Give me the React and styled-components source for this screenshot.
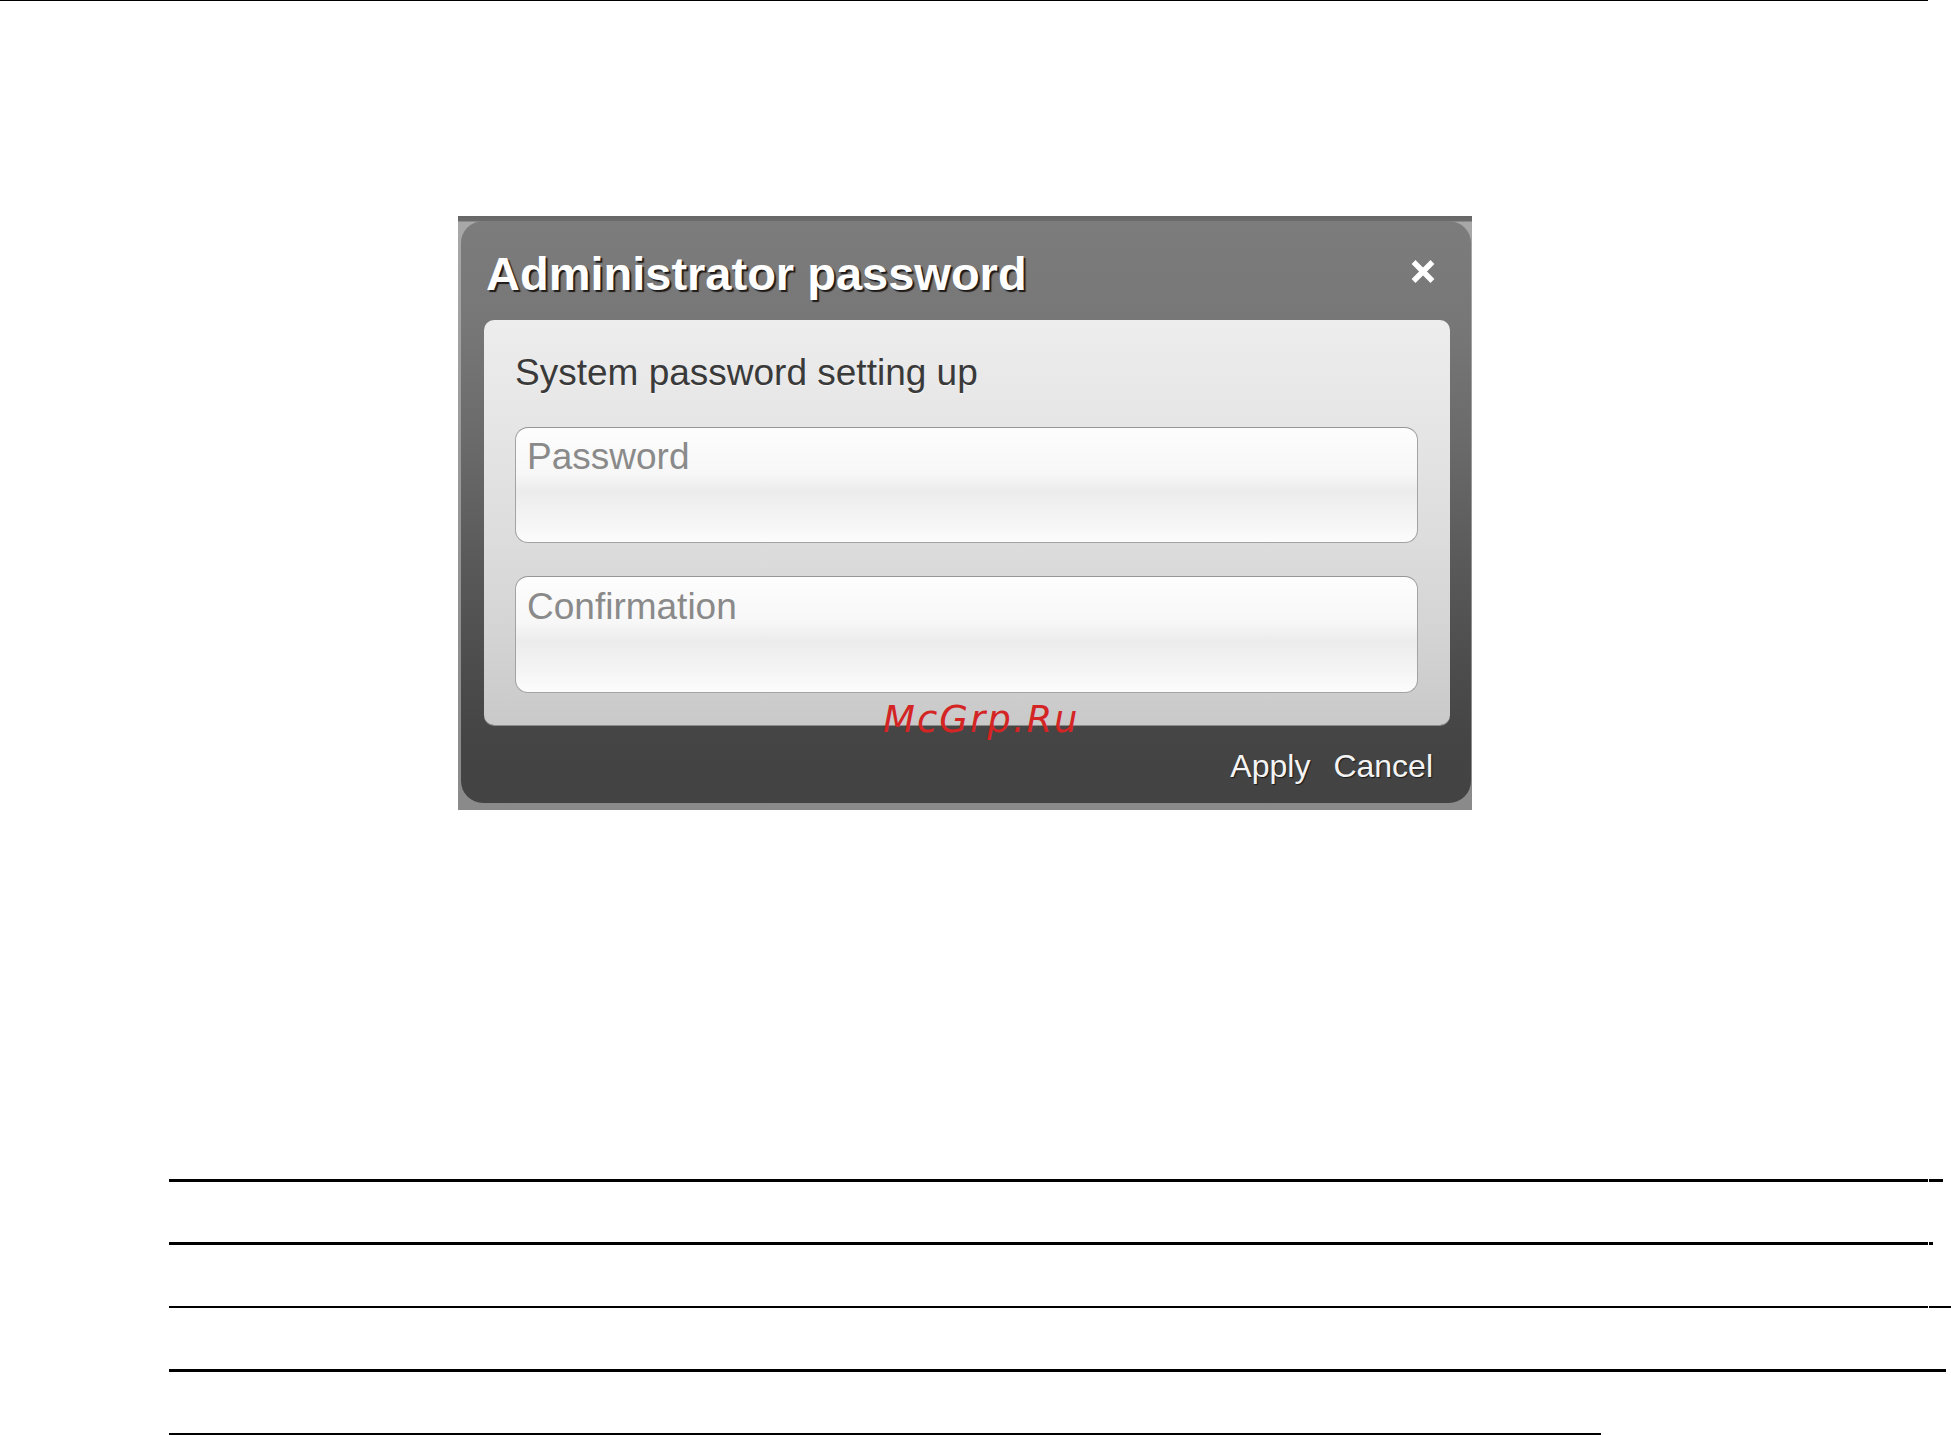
import React from "react";
import styled, { createGlobalStyle } from "styled-components";

const Global = createGlobalStyle`
  html, body { margin: 0; padding: 0; background: #fff; }
  body { font-family: "Liberation Sans", Arial, sans-serif; overflow: hidden; }
`;

const Page = styled.div`
  width: 1951px;
  display: flex;
  flex-direction: column;
`;

const TopRule = styled.div`
  width: 1928px;
  height: 1px;
  background: #000;
`;

const Frame = styled.div`
  margin: 215px 0 0 458px;
  width: 1014px;
  height: 594px;
  box-sizing: border-box;
  padding: 5px 1px 7px 3px;
  background: linear-gradient(to bottom, #676767 0, #6b6b6b 5px, #a8a8a8 6px, #8f8f8f 70%, #8a8a8a 100%);
  display: flex;
`;

const Dialog = styled.div`
  position: relative;
  flex: 1;
  border-radius: 22px;
  background: linear-gradient(to bottom, #7c7c7c 0%, #777 18%, #6a6a6a 38%, #5a5a5a 58%, #4a4a4a 80%, #444 90%, #434343 100%);
  display: flex;
  flex-direction: column;
`;

const Header = styled.div`
  height: 99px;
  box-sizing: border-box;
  padding: 29px 36px 0 25px;
  display: flex;
  justify-content: space-between;
  align-items: flex-start;
`;

const Title = styled.h1`
  margin: 0;
  font-family: "Liberation Sans", Arial, sans-serif;
  font-weight: bold;
  font-size: 47px;
  line-height: 47px;
  color: #fff;
  text-shadow: 2px 2px 1px #1e1a18;
`;

const CloseButton = styled.button`
  margin-top: 10px;
  padding: 0;
  border: 0;
  background: none;
  width: 24px;
  height: 23px;
  cursor: pointer;
  display: block;
`;

const Panel = styled.div`
  margin: 0 21px 0 23px;
  border-radius: 10px;
  background: linear-gradient(to bottom, #ededed 0%, #e6e6e6 25%, #dedede 50%, #d5d5d5 75%, #c9c9c9 100%);
  box-shadow: 0 1px 0 #8a8a8a;
  padding: 34px 32px 32px 31px;
  display: flex;
  flex-direction: column;
`;

const Subtitle = styled.div`
  font-size: 37px;
  line-height: 37px;
  color: #3a3a3a;
  text-shadow: 0 1px 0 rgba(255, 255, 255, 0.6);
  margin-bottom: 36px;
`;

const Field = styled.input`
  display: block;
  box-sizing: border-box;
  width: 100%;
  height: ${(p) => p.$h}px;
  margin-top: ${(p) => p.$mt}px;
  padding: 9px 11px 65px;
  border: 1px solid #a3a3a3;
  border-top-color: #969696;
  border-radius: 13px;
  background: linear-gradient(to bottom, #fdfdfd 0%, #f7f7f7 40%, #f0f0f0 50%, #ececec 55%, #f4f4f4 80%, #fcfcfc 100%);
  font-family: "Liberation Sans", Arial, sans-serif;
  font-size: 37px;
  color: #333;
  outline: none;
  &::placeholder {
    color: #8a8a8a;
  }
`;

const Footer = styled.div`
  flex: 1;
  display: flex;
  justify-content: flex-end;
  align-items: flex-start;
  gap: 23px;
  padding: 25px 38px 0 0;
`;

const FooterButton = styled.button`
  padding: 0;
  border: 0;
  background: none;
  font-family: "Liberation Sans", Arial, sans-serif;
  font-size: 32px;
  line-height: 32px;
  color: #f4f4f4;
  text-shadow: 1px 1px 1px #1a1a1a;
  cursor: pointer;
`;

const Watermark = styled.div`
  position: absolute;
  left: 422px;
  top: 480px;
  font-family: "DejaVu Sans", sans-serif;
  font-style: italic;
  font-size: 37px;
  line-height: 37px;
  letter-spacing: 2px;
  color: #d42424;
  pointer-events: none;
`;

const Rules = styled.div`
  margin: 369px 0 0 169px;
  display: flex;
  flex-direction: column;
`;

const RuleRow = styled.div`
  display: flex;
  gap: 1px;
  height: ${(p) => p.$t}px;
  margin-top: ${(p) => p.$mt}px;
`;

const Segment = styled.div`
  width: ${(p) => p.$w}px;
  height: 100%;
  background: #000;
  flex: none;
`;

const rules = [
  { mt: 0, t: 3, main: 1759, tail: 14 },
  { mt: 60, t: 3, main: 1759, tail: 4 },
  { mt: 61, t: 2, main: 1759, tail: 22 },
  { mt: 61, t: 3, main: 1777, tail: 0 },
  { mt: 61, t: 3, main: 1432, tail: 0 },
];

export default function App() {
  return (
    <Page>
      <Global />
      <TopRule />
      <Frame>
        <Dialog>
          <Header>
            <Title>Administrator password</Title>
            <CloseButton aria-label="Close">
              <svg width="24" height="23" viewBox="0 0 24 23">
                <path d="M4.5 4 L19.5 19 M19.5 4 L4.5 19" stroke="#fff" strokeWidth="5.5" strokeLinecap="square" fill="none" />
              </svg>
            </CloseButton>
          </Header>
          <Panel>
            <Subtitle>System password setting up</Subtitle>
            <Field type="password" placeholder="Password" $h={116} $mt={0} />
            <Field type="password" placeholder="Confirmation" $h={117} $mt={33} />
          </Panel>
          <Footer>
            <FooterButton>Apply</FooterButton>
            <FooterButton>Cancel</FooterButton>
          </Footer>
          <Watermark>McGrp.Ru</Watermark>
        </Dialog>
      </Frame>
      <Rules>
        {rules.map((r, i) => (
          <RuleRow key={i} $t={r.t} $mt={r.mt}>
            <Segment $w={r.main} />
            {r.tail > 0 && <Segment $w={r.tail} />}
          </RuleRow>
        ))}
      </Rules>
    </Page>
  );
}
